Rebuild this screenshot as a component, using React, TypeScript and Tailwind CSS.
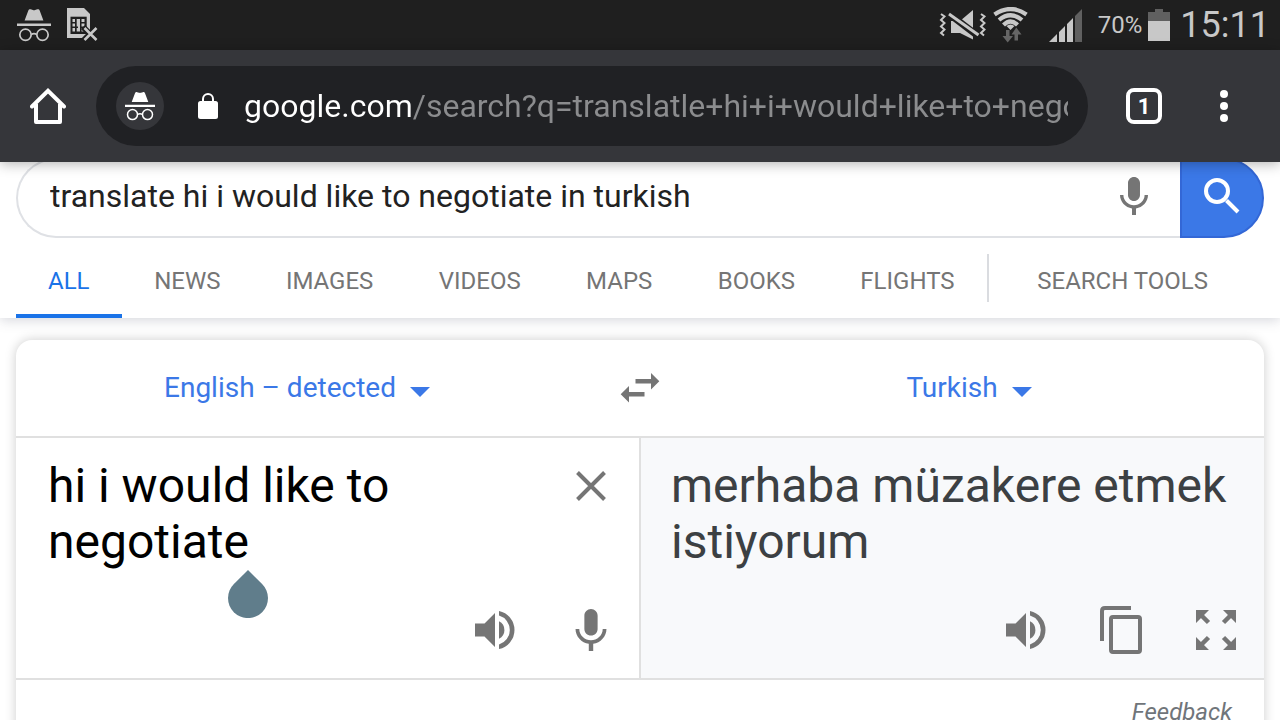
import React, { useState } from 'react';

const TABS = ['ALL', 'NEWS', 'IMAGES', 'VIDEOS', 'MAPS', 'BOOKS', 'FLIGHTS'];

const IncognitoIcon = ({ className }: { className: string }) => (
  <svg viewBox="0 0 30 30" className={className} aria-hidden="true">
    <path
      fill="currentColor"
      d="M6.7 11 10 2.2C10.4 1.2 11.2.9 12.1 1.2L14 1.8C14.7 2 15.3 2 16 1.8L17.9 1.2C18.8.9 19.7 1.2 20 2.2L23.3 11ZM0 13.7H30V15.9H0Z"
    />
    <g fill="none" stroke="currentColor" strokeWidth="1.5">
      <circle cx="7.5" cy="23.6" r="5" />
      <circle cx="22.5" cy="23.6" r="5" />
      <path d="M12.5 23.3Q15 22 17.5 23.3" />
    </g>
  </svg>
);

const SimOffIcon = () => (
  <svg viewBox="0 0 31 34" className="h-[34px] w-[31px]" aria-hidden="true">
    <path fill="#c8c8c8" d="M0 0H17L23 6V30H0Z" />
    <path fill="#1f1f1f" d="M3.5 8.7H19.7V26H3.5Z" />
    <path
      fill="#c8c8c8"
      d="M5.5 11H8V14H5.5ZM5.5 15.5H8V18.5H5.5ZM5.5 20H8V23.5H5.5ZM9.7 11H13V23.5H9.7V20H11V18.5H9.7ZM14.5 11H17.5V14H14.5ZM14.5 15.5H17.5V18.5H14.5ZM14.5 20H17.5V23.5H14.5Z"
    />
    <path stroke="#1f1f1f" strokeWidth="6" d="m16 19 14 14M30 19 16 33" />
    <path stroke="#c8c8c8" strokeWidth="2.6" d="m17.5 20 12 12M29.500 20 17.500 32" />
  </svg>
);

const MuteIcon = () => (
  <svg viewBox="0 0 48 32" className="h-8 w-12" aria-hidden="true">
    <path fill="#c8c8c8" d="M12 12H21L34 1V30.5L21 24H12Z" />
    <path stroke="#1f1f1f" strokeWidth="7" d="M9 4 39 27" />
    <path stroke="#c8c8c8" strokeWidth="3" d="M10 5 39.5 26" />
    <g fill="none" stroke="#c8c8c8" strokeWidth="2">
      <path d="M2 5 5.5 7.5 2 11 5.5 14 2 17.5 5.5 20.5 2 24 5 26.5" />
      <path d="M42 5 45.5 7.5 42 11 45.5 14 42 17.5 45.5 20.5 42 24 45 26.5" />
    </g>
  </svg>
);

const WifiIcon = () => (
  <svg viewBox="0 0 36 36" className="size-9" aria-hidden="true">
    <g fill="none" stroke="#c8c8c8" strokeWidth="4.2">
      <path d="M1.500 7.500Q17.500-3.500 33.500 7.500" />
      <path d="M6 13Q17.500 3.500 29 13" />
      <path d="M10.500 18Q17.500 11 24.500 18" />
    </g>
    <path fill="#c8c8c8" d="M13.5 19Q17.5 16 21.5 19L17.5 23Z" />
    <path
      fill="#666"
      d="M13 23H16.5V29H20L14.7 35.5 9.5 29H13ZM21.5 33.5H25V27.5H28.5L23.3 20.5 18.5 27.5H21.5Z"
    />
  </svg>
);

const SignalIcon = () => (
  <svg viewBox="0 0 33 33" className="size-[33px]" aria-hidden="true">
    <path fill="#c8c8c8" d="M0 33 8 25V33ZM10 33V23L16 17V33ZM18 33V15L24 9V33Z" />
    <path fill="#606060" d="M26 33V7L33 0V33Z" />
  </svg>
);

const BatteryIcon = () => (
  <svg viewBox="0 0 22 32" className="h-8 w-[22px]" aria-hidden="true">
    <path fill="#606060" d="M7 0H15V3H22V12H0V3H7Z" />
    <path fill="#c8c8c8" d="M0 12H22V32H0Z" />
  </svg>
);

const HomeIcon = () => (
  <svg viewBox="0 0 36 36" className="size-9" fill="none" stroke="#fff" strokeWidth="4" aria-hidden="true">
    <path strokeLinecap="round" strokeLinejoin="miter" d="M2 18.5 18 2.8 34 18.5" />
    <path strokeLinejoin="round" d="M6 16V34H30V16" />
  </svg>
);

const LockIcon = () => (
  <svg viewBox="0 0 20 26" className="h-[26px] w-5 shrink-0" aria-hidden="true">
    <rect y="8" width="20" height="18" rx="2.5" fill="#fff" />
    <path fill="none" stroke="#fff" strokeWidth="2" d="M5 9V6A5 5 0 0 1 15 6V9" />
  </svg>
);

const MicIcon = ({ className }: { className: string }) => (
  <svg viewBox="5 2 14 19" className={className} fill="#757575" aria-hidden="true">
    <path d="M12 14c1.66 0 2.99-1.34 2.99-3L15 5c0-1.66-1.34-3-3-3S9 3.34 9 5v6c0 1.66 1.34 3 3 3zm5.3-3c0 3-2.54 5.1-5.3 5.1S6.7 14 6.7 11H5c0 3.41 2.72 6.23 6 6.72V21h2v-3.28c3.28-.48 6-3.3 6-6.72h-1.7z" />
  </svg>
);

const SearchIcon = () => (
  <svg viewBox="0 0 36 36" className="size-9" fill="none" stroke="#fff" strokeWidth="4" aria-hidden="true">
    <circle cx="13" cy="13" r="11" />
    <path d="M22.5 22.5 34 34" />
  </svg>
);

const SpeakerIcon = () => (
  <svg viewBox="0 0 40 38" className="h-[38px] w-10" fill="#757575" aria-hidden="true">
    <path d="M0 12.5H9.5L20 2V36L9.5 25.5H0Z" />
    <path d="M24 10.300A9.700 9.700 0 0 1 24 27.700Z" />
    <path d="M24 0A19.400 19.400 0 0 1 24 38V33.400A15 15 0 0 0 24 4.600Z" />
  </svg>
);

const CopyIcon = () => (
  <svg viewBox="0 0 42 48" className="h-12 w-[42px]" fill="none" stroke="#757575" strokeWidth="4" aria-hidden="true">
    <path d="M31 2H5Q2 2 2 5V35" />
    <rect x="11" y="11" width="29" height="35" rx="2" />
  </svg>
);

const ExpandIcon = () => (
  <svg viewBox="0 0 40 40" className="size-10" fill="#757575" stroke="#757575" aria-hidden="true">
    <path stroke="none" d="M0 0H13L0 13ZM40 0V13L27 0ZM0 40V27L13 40ZM40 40H27L40 27Z" />
    <path strokeWidth="4.5" d="M5 5 12.5 12.5M35 5 27.5 12.5M5 35 12.5 27.5M35 35 27.5 27.5" />
  </svg>
);

const SwapIcon = () => (
  <svg viewBox="0 0 40 30" className="h-[30px] w-10" fill="#757575" aria-hidden="true">
    <path d="M15.500 6H31V0L39.300 8.300 31 16.500V10.500H15.500ZM24.500 19H9V13L.7 21.300 9 29.500V23.500H24.500Z" />
  </svg>
);

interface LanguageSelectProps {
  label: string;
  options: string[];
}

const LanguageSelect = ({ label, options }: LanguageSelectProps) => (
  <div className="flex flex-1 items-center justify-center pr-3.5">
    <select
      aria-label={label}
      className="field-sizing-content appearance-none bg-transparent text-[28px] leading-10 text-[#3b78e7] outline-none"
    >
      {options.map(option => (
        <option key={option}>{option}</option>
      ))}
    </select>
    <svg viewBox="0 0 20 10" className="pointer-events-none mt-2 ml-3.5 h-2.5 w-5" aria-hidden="true">
      <path fill="#3b78e7" d="M0 0H20L10 10Z" />
    </svg>
  </div>
);

const StatusBar = () => (
  <div className="flex h-[50px] shrink-0 items-center justify-between bg-[#1f1f1f] pr-2.5 pl-[17px] text-[#c8c8c8]">
    <div className="flex items-center gap-4">
      <IncognitoIcon className="size-[34px]" />
      <SimOffIcon />
    </div>
    <div className="flex items-center">
      <MuteIcon />
      <div className="ml-1.5 flex items-center gap-5">
        <WifiIcon />
        <SignalIcon />
      </div>
      <span className="ml-4 text-2xl">70%</span>
      <span className="ml-1.5">
        <BatteryIcon />
      </span>
      <span className="ml-2.5 text-4xl">15:11</span>
    </div>
  </div>
);

const Toolbar = () => (
  <header className="relative z-10 flex h-28 shrink-0 items-center bg-[#35363a] pr-11 pl-[30px] shadow-[0_2px_12px_rgba(0,0,0,0.3)]">
    <button aria-label="Home">
      <HomeIcon />
    </button>
    <div className="ml-[30px] flex h-20 min-w-0 flex-1 items-center rounded-full bg-[#202124] px-5">
      <span className="flex size-12 shrink-0 items-center justify-center rounded-full bg-[#35363a] text-white">
        <IncognitoIcon className="size-[30px]" />
      </span>
      <span className="mr-[26px] ml-[34px]">
        <LockIcon />
      </span>
      {/* The host is white, the rest of the address is dimmed */}
      <input
        aria-label="Address"
        readOnly
        value="google.com/search?q=translatle+hi+i+would+like+to+negotiate"
        className="min-w-0 flex-1 bg-[linear-gradient(90deg,#ffffff_167px,#8b8c8e_167px)] bg-clip-text text-[32px] text-transparent outline-none"
      />
    </div>
    <button
      aria-label="Open tabs"
      className="ml-[38px] flex size-9 items-center justify-center rounded-lg border-4 border-white text-[22px] font-bold text-white"
    >
      1
    </button>
    <button aria-label="More options" className="ml-[50px] flex w-6 flex-col items-center gap-1">
      <span className="size-2 rounded-full bg-white" />
      <span className="size-2 rounded-full bg-white" />
      <span className="size-2 rounded-full bg-white" />
    </button>
  </header>
);

export default function App() {
  const [query, setQuery] = useState('translate hi i would like to negotiate in turkish');
  const [source, setSource] = useState('hi i would like to negotiate');

  return (
    <div className="flex h-screen flex-col overflow-hidden bg-white font-['Roboto',sans-serif]">
      <StatusBar />
      <Toolbar />

      <main className="min-h-0 flex-1 overflow-hidden">
        <div className="shadow-[0_2px_12px_rgba(60,64,90,0.22)]">
          {/* Search box, scrolled slightly under the toolbar */}
          <form className="-mt-1 flex h-20 px-4" onSubmit={e => e.preventDefault()}>
            <div className="flex flex-1 items-center rounded-l-full border-2 border-r-0 border-[#dfe1e5] px-8 pb-1">
              <input
                aria-label="Search"
                value={query}
                onChange={e => setQuery(e.target.value)}
                className="min-w-0 flex-1 text-[32px] text-[#222] outline-none"
              />
              <button type="button" aria-label="Search by voice">
                <MicIcon className="h-[38px] w-7" />
              </button>
            </div>
            <button
              aria-label="Submit search"
              className="flex w-[84px] items-center justify-center rounded-r-full border-2 border-[#3367d6] bg-[#3b78e7] pb-1"
            >
              <SearchIcon />
            </button>
          </form>

          <nav className="flex h-20 items-center px-4 text-2xl whitespace-nowrap text-[#757575]">
            {TABS.map((tab, i) => (
              <a
                key={tab}
                href="#"
                className={
                  i === 0
                    ? 'flex h-20 items-center border-b-4 border-[#1a73e8] px-8 pt-2.5 text-[#1a73e8]'
                    : 'flex h-20 grow items-center justify-center px-8 pt-1.5'
                }
              >
                {tab}
              </a>
            ))}
            <a href="#" className="flex h-12 items-center border-l-2 border-[#dadce0] pt-1.5 pr-14 pl-12">
              SEARCH TOOLS
            </a>
          </nav>
        </div>

        {/* Translate card */}
        <section className="mx-4 mt-[22px] rounded-2xl bg-white shadow-[0_0_12px_rgba(0,0,0,0.2)]">
          <div className="flex h-24 items-center">
            <LanguageSelect label="Source language" options={['English – detected']} />
            <button aria-label="Swap languages" className="flex w-24 justify-center">
              <SwapIcon />
            </button>
            <LanguageSelect label="Target language" options={['Turkish']} />
          </div>

          <div className="flex h-61 border-y-2 border-[#e0e0e0] text-5xl leading-14">
            <div className="flex min-w-0 flex-1 flex-col justify-between pt-5 pb-6">
              <div className="relative flex items-start px-8">
                <textarea
                  aria-label="Source text"
                  rows={2}
                  value={source}
                  onChange={e => setSource(e.target.value)}
                  className="min-w-0 flex-1 resize-none overflow-hidden text-black outline-none"
                />
                <button aria-label="Clear source text" className="mt-3 ml-16">
                  <svg viewBox="0 0 32 32" className="size-8" stroke="#757575" strokeWidth="4" aria-hidden="true">
                    <path d="m2.5 2.5 27 27M29.5 2.5l-27 27" />
                  </svg>
                </button>
                {/* Text cursor handle */}
                <svg viewBox="0 0 40 48" className="absolute top-28 left-[212px] h-12 w-10" aria-hidden="true">
                  <path fill="#607d8b" d="M20 0 5.9 13.9A20 20 0 1 0 34.1 13.9Z" />
                </svg>
              </div>
              <div className="flex h-12 items-center justify-end gap-15 pr-8">
                <button aria-label="Listen to source text">
                  <SpeakerIcon />
                </button>
                <button aria-label="Speak">
                  <MicIcon className="h-[42px] w-8" />
                </button>
              </div>
            </div>

            <div className="flex min-w-0 flex-1 flex-col justify-between border-l-2 border-[#e0e0e0] bg-[#f8f9fb] pt-5 pb-6">
              <p className="pr-4 pl-[30px] text-[#3c4043]">merhaba müzakere etmek istiyorum</p>
              <div className="flex h-12 items-center justify-end gap-[54px] pr-7">
                <button aria-label="Listen to translation">
                  <SpeakerIcon />
                </button>
                <button aria-label="Copy translation">
                  <CopyIcon />
                </button>
                <button aria-label="Full screen">
                  <ExpandIcon />
                </button>
              </div>
            </div>
          </div>

          <div className="flex justify-end px-8 py-4">
            <a href="#" className="text-2xl text-[#70757a] italic">
              Feedback
            </a>
          </div>
        </section>
      </main>
    </div>
  );
}
